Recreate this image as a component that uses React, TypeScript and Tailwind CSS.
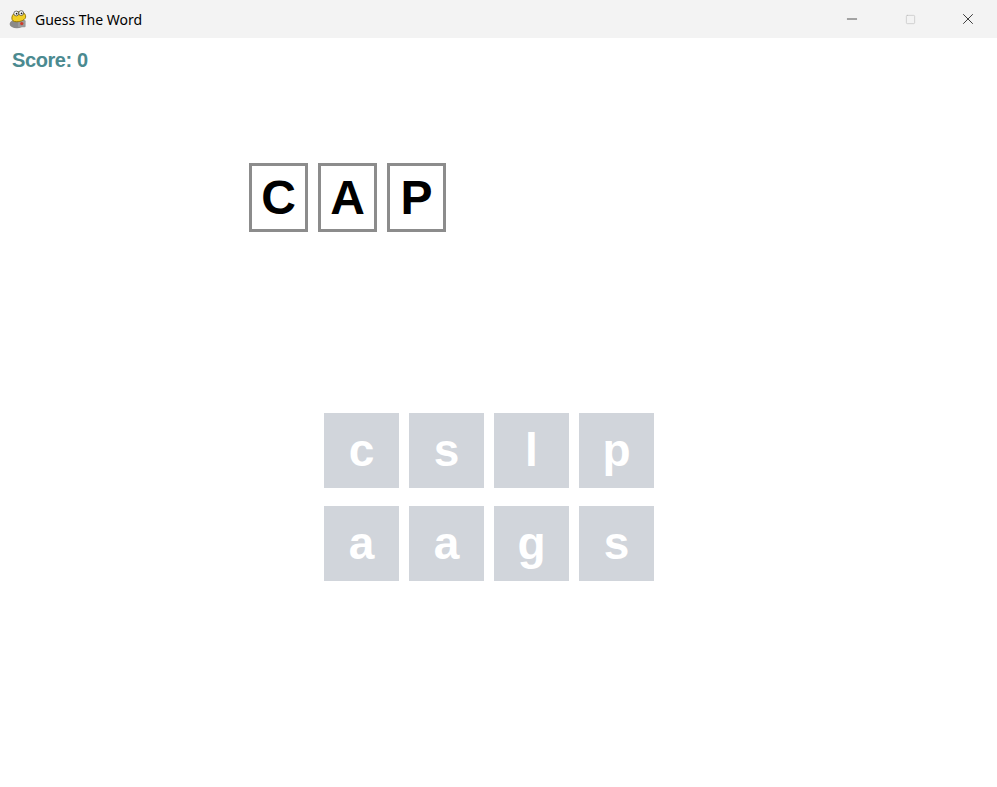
import { Minus, Square, X } from "lucide-react";

const answer = ["C", "A", "P"];
const tiles = ["c", "s", "l", "p", "a", "a", "g", "s"];

function PygameIcon() {
  return (
    <svg width="22" height="22" viewBox="0 0 20 20">
      <ellipse cx="8" cy="14.5" rx="6.5" ry="4" fill="#8a8a8a" />
      <rect x="9" y="11" width="7" height="6.5" rx="1" fill="#9a9a9a" />
      <circle cx="12.5" cy="14.2" r="1.5" fill="#d03a2a" />
      <path d="M3.5 9 C3.5 2.5 15 1.5 16 7 C16.8 11 11 12.5 8 12.5 C5 12.5 3.5 11.5 3.5 9 Z" fill="#f2cf24" stroke="#8a6d00" strokeWidth="0.8" />
      <circle cx="7.5" cy="5" r="2.2" fill="#fff" stroke="#333" strokeWidth="0.6" />
      <circle cx="12" cy="4.6" r="2.2" fill="#fff" stroke="#333" strokeWidth="0.6" />
      <circle cx="7.8" cy="5.2" r="0.8" fill="#111" />
      <circle cx="12.3" cy="4.8" r="0.8" fill="#111" />
    </svg>
  );
}

function TitleBar() {
  return (
    <div className="flex h-[38px] items-center bg-[#f3f3f3]">
      <div className="ml-[8px] flex items-center">
        <PygameIcon />
      </div>
      <span className="ml-[5px] text-[14px] text-black [font-family:'Noto_Sans',sans-serif]">
        Guess The Word
      </span>
      <div className="ml-auto flex h-full">
        <div className="flex w-[58px] items-center justify-center">
          <Minus size={16} strokeWidth={1} className="text-black" />
        </div>
        <div className="flex w-[58px] items-center justify-center">
          <Square size={11} strokeWidth={1.2} className="text-[#b5b5b5]" />
        </div>
        <div className="flex w-[58px] items-center justify-center">
          <X size={18} strokeWidth={1} className="text-black" />
        </div>
      </div>
    </div>
  );
}

export default function App() {
  return (
    <div className="flex h-[787px] w-[997px] flex-col overflow-hidden bg-white [font-family:'Liberation_Sans',Arial,sans-serif]">
      <TitleBar />
      <div className="flex flex-1 flex-col">
        <div className="pl-[12px] pt-[11px] text-[20px] leading-[23px] font-bold tracking-[-0.4px] text-[#4b8a90]">
          Score: 0
        </div>

        <div className="ml-[249px] mt-[91px] flex gap-[10px]">
          {answer.map((letter, i) => (
            <div
              key={i}
              className="flex h-[69px] w-[59px] items-center justify-center border-[3px] border-[#8c8c8c] text-[48px] font-bold text-black"
            >
              {letter}
            </div>
          ))}
        </div>

        <div className="ml-[324px] mt-[181px] grid w-fit grid-cols-[repeat(4,75px)] gap-x-[10px] gap-y-[18px]">
          {tiles.map((letter, i) => (
            <div
              key={i}
              className="flex h-[75px] w-[75px] items-center justify-center bg-[#d1d5db] text-[46px] font-bold text-white"
            >
              {letter}
            </div>
          ))}
        </div>
      </div>
    </div>
  );
}
